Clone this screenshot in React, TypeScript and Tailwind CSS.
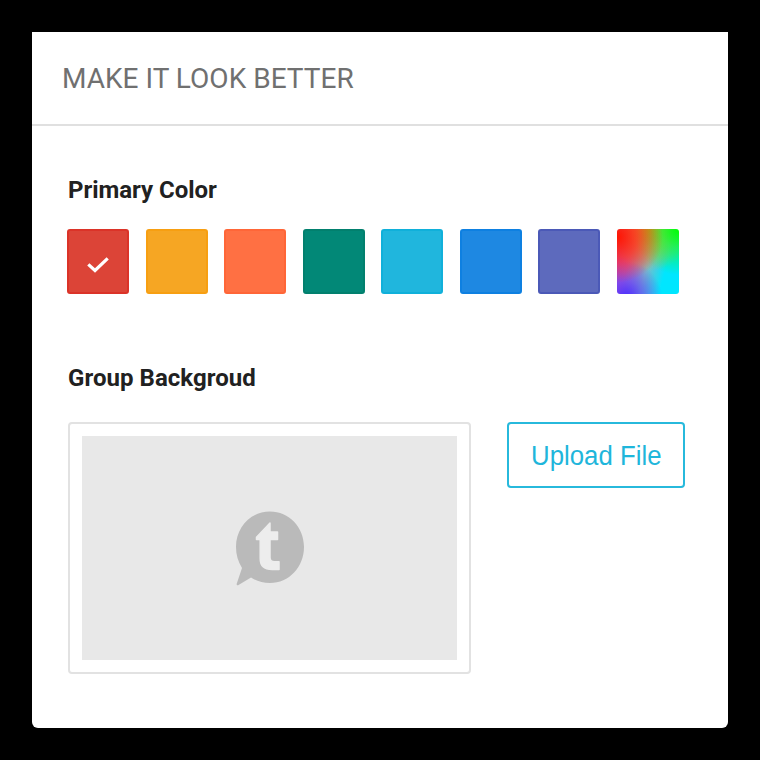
const swatches = [
  { name: 'Red', style: 'bg-[#dc4437] border-[#db3328]' },
  { name: 'Amber', style: 'bg-[#f6a623] border-[#f79f12]' },
  { name: 'Orange', style: 'bg-[#ff7043] border-[#ff6638]' },
  { name: 'Teal', style: 'bg-[#028877] border-[#02806e]' },
  { name: 'Cyan', style: 'bg-[#20b6dd] border-[#10b0da]' },
  { name: 'Blue', style: 'bg-[#1e88e2] border-[#0e80e1]' },
  { name: 'Indigo', style: 'bg-[#5d6abd] border-[#4b59b7]' },
];

function Check() {
  return (
    <svg className="mt-1.5 h-[18px] w-[24px]" viewBox="0 0 24 18" fill="none" stroke="#fff" strokeWidth="3.2">
      <path d="M2.3 8.3 9 14.500 21.700 2.300" />
    </svg>
  );
}

function BubbleLogo() {
  return (
    <svg className="h-[76px] w-[70px]" viewBox="0 0 70 76">
      <path
        d="M35 1.5C54 1.5 69 17 69 37S54 73 35 73c-7.500 0-13.500-2-19-5.500L3.500 75c-1.200.7-2.200-.2-1.700-1.500L7 58C3 51.500 1 45 1 37 1 17 16 1.500 35 1.500Z"
        fill="#bababa"
      />
      <path
        d="M35 13v9H42.500v7.500H35V47.500c0 3.200 1.200 4.300 4.500 4.300h4.500V59.500H37c-8 0-11.800-3.500-11.800-11V29.500h-3.700v-2.200Z"
        fill="#ededed"
        stroke="#ededed"
        strokeWidth="1.5"
        strokeLinejoin="round"
      />
    </svg>
  );
}

export default function App() {
  return (
    <div className="h-[760px] w-[760px] bg-black p-8 font-['Roboto',sans-serif]">
      <main className="h-[696px] rounded-b-[6px] bg-white">
        <header className="flex h-[94px] items-center border-b-2 border-[#e0e0e0] pt-0.5 pl-[30px]">
          <h1 className="text-[28px] leading-8 tracking-[0.02px] text-[#707070]">MAKE IT LOOK BETTER</h1>
        </header>
        <section className="pl-[35px] pt-12">
          <h2 className="pl-px text-[24px] leading-8 font-bold tracking-[-0.04px] text-[#212121]">Primary Color</h2>
          <div className="mt-[23px] flex gap-[16.5px]">
            {swatches.map((swatch, index) => (
              <button
                key={swatch.name}
                aria-label={swatch.name}
                className={`flex h-[65px] w-[62px] shrink-0 items-center justify-center rounded-[3px] border-2 ${swatch.style}`}
              >
                {index === 0 && <Check />}
              </button>
            ))}
            <button
              aria-label="Custom color"
              className="h-[65px] w-[62px] shrink-0 rounded-[3px] bg-[radial-gradient(circle_46px_at_0%_12%,#ff1500_0%,#ff2c1cc0_45%,#ff302000_100%),radial-gradient(circle_46px_at_100%_0%,#00ff00_0%,#10fa30b0_40%,#20f84000_100%),radial-gradient(circle_36px_at_15%_105%,#4a2cff_0%,#5540ffa0_45%,#5540ff00_100%),radial-gradient(circle_42px_at_52%_0%,#f2ac00_0%,#e0b830c0_40%,#e0b83000_100%),linear-gradient(105deg,#b030f0_0%,#c85cc0_25%,#80b8c8_50%,#00e6ff_75%)]"
            />
          </div>
        </section>
        <section className="pl-9 pt-[68px]">
          <h2 className="text-[24px] leading-8 font-bold tracking-[0.05px] text-[#212121]">Group Backgroud</h2>
          <div className="mt-7 flex items-start gap-9">
            <div className="h-[252px] w-[403px] rounded-[4px] border-2 border-[#e2e2e2] p-3">
              <div className="flex h-full items-center justify-center bg-[#e8e8e8]">
                <BubbleLogo />
              </div>
            </div>
            <button className="h-[66px] w-[178px] rounded-[4px] border-2 border-[#27b9dc] pt-0.5 font-['Liberation_Sans',Arial,sans-serif] text-[27px] text-[#1fb6db]">
              <span className="inline-block scale-x-[0.955] whitespace-nowrap">Upload File</span>
            </button>
          </div>
        </section>
      </main>
    </div>
  );
}
